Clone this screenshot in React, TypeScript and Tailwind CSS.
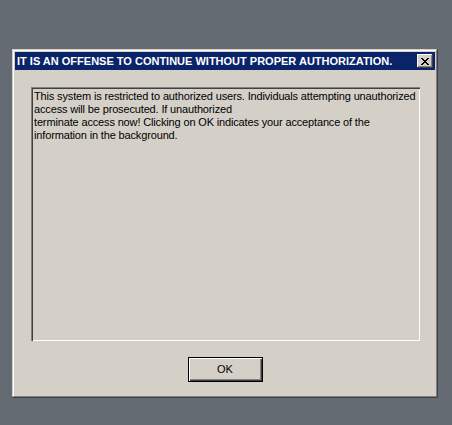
export default function App() {
  return (
    <div className="w-[452px] h-[425px] bg-[#646b73] pt-[49px] pl-[12px]" style={{ fontFamily: '"Liberation Sans", Arial, sans-serif' }}>
      <div className="w-[426px] h-[349px] bg-[#d4d0c8] p-[3px] shadow-[inset_-1px_-1px_#404040,inset_1px_1px_#d4d0c8,inset_-2px_-2px_#808080,inset_2px_2px_#ffffff] flex flex-col">
        <div className="h-[18px] bg-[#0a246a] flex items-center justify-between pl-[2px] pr-[2px]">
          <span className="text-white font-bold text-[11px] leading-[18px] whitespace-nowrap">IT IS AN OFFENSE TO CONTINUE WITHOUT PROPER AUTHORIZATION.</span>
          <div className="w-[16px] h-[14px] bg-[#d4d0c8] shadow-[inset_-1px_-1px_#404040,inset_1px_1px_#ffffff,inset_-2px_-2px_#808080] flex items-center justify-center">
            <svg width="8" height="7" viewBox="0 0 8 7" shapeRendering="crispEdges">
              <path d="M0 0h2v1h-2zM6 0h2v1h-2zM1 1h2v1h-2zM5 1h2v1h-2zM2 2h4v1h-4zM3 3h2v1h-2zM2 4h4v1h-4zM1 5h2v1h-2zM5 5h2v1h-2zM0 6h2v1h-2zM6 6h2v1h-2z" fill="#000" />
            </svg>
          </div>
        </div>
        <div className="ml-[16px] mt-[17px] w-[389px] h-[254px] shadow-[inset_1px_1px_#808080,inset_2px_2px_#404040,inset_-1px_-1px_#ffffff,inset_-2px_-2px_#d4d0c8] pt-[3px] pl-[3px] pr-[3px]">
          <p className="text-[11px] leading-[13px] tracking-[-0.15px] text-black whitespace-nowrap">
            This system is restricted to authorized users. Individuals attempting unauthorized
            <br />
            access will be prosecuted. If unauthorized
            <br />
            terminate access now! Clicking on OK indicates your acceptance of the
            <br />
            information in the background.
          </p>
        </div>
        <div className="flex justify-center mt-[16px]">
          <button className="w-[75px] h-[25px] bg-[#d4d0c8] text-[11px] text-black shadow-[inset_1px_1px_#000,inset_-1px_-1px_#000,inset_2px_2px_#ffffff,inset_-2px_-2px_#404040,inset_-3px_-3px_#808080] flex items-center justify-center">
            OK
          </button>
        </div>
      </div>
    </div>
  );
}
